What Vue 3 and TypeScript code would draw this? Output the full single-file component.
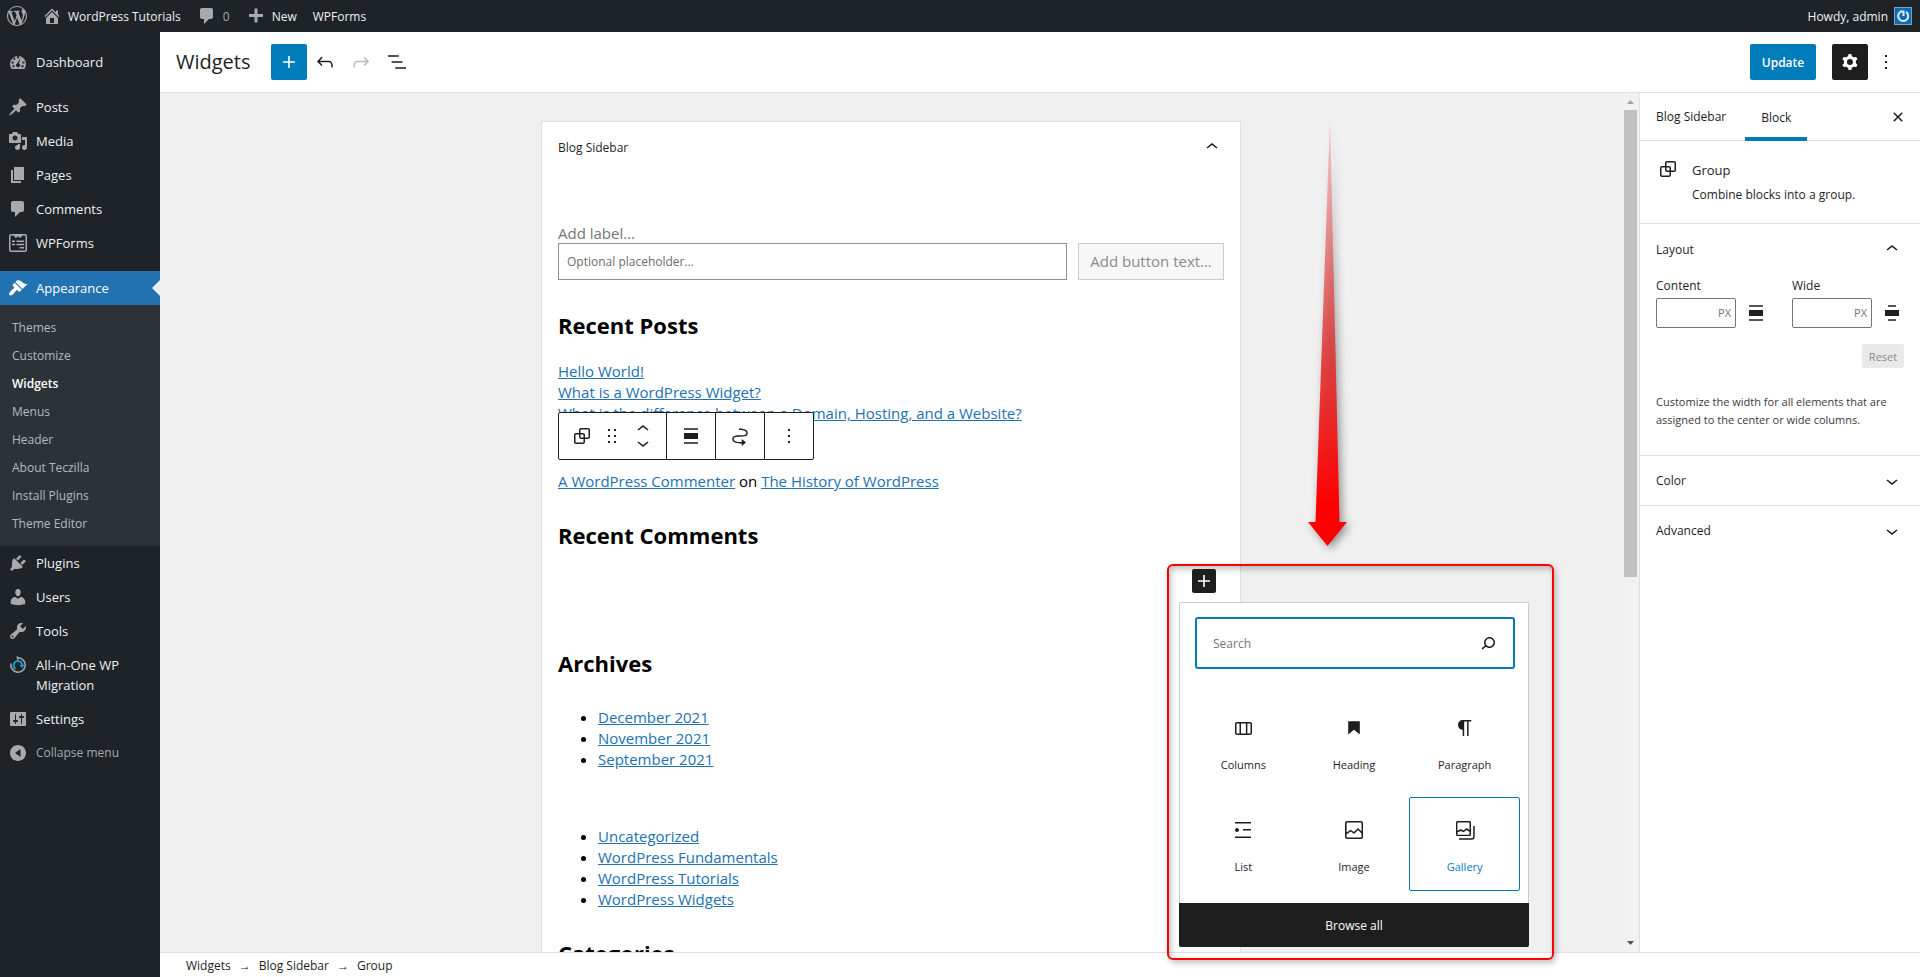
<script setup lang="ts">
import { ref } from 'vue'

interface MenuItem { label: string; icon: string }

const dash: Record<string, string> = {
  wordpress: 'M20 10c0-5.51-4.49-10-10-10C4.48 0 0 4.49 0 10c0 5.52 4.48 10 10 10 5.51 0 10-4.48 10-10zM7.78 15.37L4.37 6.22c.55-.02 1.17-.08 1.17-.08.5-.06.44-1.13-.06-1.11 0 0-1.45.11-2.37.11-.18 0-.37 0-.58-.01C4.12 2.69 6.87 1.11 10 1.11c2.33 0 4.45.87 6.05 2.34-.68-.11-1.65.39-1.65 1.58 0 .74.45 1.36.9 2.1.35.61.55 1.36.55 2.46 0 1.49-1.4 5-1.4 5l-3.03-8.37c.54-.02.82-.17.82-.17.5-.05.44-1.25-.06-1.22 0 0-1.44.12-2.38.12-.87 0-2.33-.12-2.33-.12-.5-.03-.56 1.2-.06 1.22l.92.08 1.26 3.41zM17.41 10c.24-.64.74-1.87.43-4.25.7 1.29 1.05 2.71 1.05 4.25 0 3.29-1.73 6.24-4.4 7.78.97-2.59 1.94-5.2 2.92-7.78zM6.1 18.09C3.12 16.65 1.11 13.53 1.11 10c0-1.3.23-2.48.72-3.59C3.25 10.3 4.67 14.2 6.1 18.09zm4.03-6.63l2.58 6.98c-.86.29-1.76.45-2.71.45-.79 0-1.57-.11-2.29-.33.81-2.38 1.62-4.74 2.42-7.1z',
  home: 'M16 8.5l1.53 1.53-1.06 1.06L10 4.6l-6.47 6.49-1.06-1.06L10 2.5l4 4v-2h2v4zm-6-2.46l6 5.99V18H4v-5.97zM12 17v-5H8v5h4z',
  comments: 'M5 2h9c1.1 0 2 .9 2 2v7c0 1.1-.9 2-2 2h-2l-5 5v-5H5c-1.1 0-2-.9-2-2V4c0-1.1.9-2 2-2z',
  plus: 'M17 8v3h-5.5v5.5h-3V11H3V8h5.500V2.500h3V8H17z',
  dashboard: 'M3.760 17A8 8 0 1 1 16.240 17ZM9 4.200v2h2v-2zM5.300 5.800v2h2v-2zM12.700 5.800l-3.600 5.600a2 2 0 1 0 1.900 0zM3.500 9.500v2h2v-2zM14.500 9.500v2h2v-2zM4.500 13.300v2h2v-2zM13.500 13.300v2h2v-2z',
  post: 'M10.44 3.02l1.82-1.82 6.36 6.35-1.83 1.82c-1.05-.68-2.48-.57-3.41.36l-.75.75c-.92.93-1.04 2.35-.35 3.41l-1.83 1.82-2.41-2.41-2.8 2.79c-.42.42-3.38 2.71-3.8 2.29s1.86-3.39 2.28-3.81l2.79-2.79L4.1 9.36l1.83-1.82c1.05.69 2.48.57 3.4-.36l.75-.75c.93-.92 1.05-2.35.36-3.41z',
  media: 'M13 11V4c0-.55-.45-1-1-1h-1.67L9 1H5L3.67 3H2c-.55 0-1 .45-1 1v7c0 .55.45 1 1 1h10c.55 0 1-.45 1-1zM7 4.5c1.38 0 2.5 1.12 2.5 2.5S8.38 9.5 7 9.5 4.5 8.38 4.5 7 5.62 4.5 7 4.5zM14 6h5v10.5c0 1.38-1.12 2.5-2.5 2.5S14 17.88 14 16.5s1.12-2.5 2.5-2.5c.17 0 .34.02.5.05V9h-3V6zm-4 8.05V13h2v3.5c0 1.38-1.12 2.5-2.5 2.5S7 17.88 7 16.5 8.12 14 9.5 14c.17 0 .34.02.5.05z',
  page: 'M6 15V2h10v13H6zm-1 1h8v2H3V5h2v11z',
  forms: 'M3 1h14a2 2 0 0 1 2 2v14a2 2 0 0 1-2 2H3a2 2 0 0 1-2-2V3a2 2 0 0 1 2-2zM2.500 3v14c0 .3.2.5.5.5h14c.3 0 .5-.2.5-.5V3c0-.3-.2-.5-.5-.5h-2.200L12 5 10 3.200 8 5 5.200 2.500H3c-.3 0-.5.2-.5.5zM4 7.500h3V9H4zM8.500 7.500H16V9H8.500zM4 10.700h3v1.500H4zM8.500 10.700H16v1.500H8.500zM11.500 14H16v1.500h-4.500z',
  appearance: 'M14.48 11.06L7.41 3.99l1.5-1.5c.5-.56 2.3-.47 3.51.32 1.21.8 1.43 1.28 2.91 2.1 1.18.64 2.45 1.26 4.45.85zm-.71.71L6.7 4.7 4.93 6.47c-.39.39-.39 1.02 0 1.41l1.06 1.06c.39.39.39 1.03 0 1.42-.6.6-1.43 1.11-2.21 1.69-.35.26-.7.53-1.01.84C1.43 14.23.4 16.08 1.4 17.07c.99 1 2.84-.03 4.18-1.36.31-.31.58-.66.85-1.02.57-.78 1.08-1.61 1.69-2.21.39-.39 1.02-.39 1.41 0l1.06 1.06c.39.39 1.02.39 1.41 0z',
  plugins: 'M13.11 4.36L9.87 7.6 8 5.73l3.24-3.24c.35-.34 1.05-.2 1.56.32.52.51.66 1.21.31 1.55zm-8 1.77l.91-1.12 9.01 9.01-1.19.84c-.71.71-2.63 1.16-3.82 1.16H6.14L4.9 17.26c-.59.59-1.54.59-2.12 0-.59-.58-.59-1.53 0-2.12l1.24-1.24v-3.88c0-1.13.4-3.19 1.09-3.89zm7.26 3.97l3.24-3.24c.34-.35 1.04-.21 1.55.31.52.51.66 1.21.31 1.55l-3.24 3.25z',
  users: 'M10 9.25c-2.27 0-2.73-3.44-2.73-3.44C7 4.02 7.82 2 9.97 2c2.16 0 2.98 2.02 2.71 3.81 0 0-.41 3.44-2.68 3.44zm0 2.57L12.72 10c2.39 0 4.52 2.33 4.52 4.53v2.49s-3.65 1.13-7.24 1.13c-3.65 0-7.24-1.13-7.24-1.13v-2.49c0-2.25 1.94-4.48 4.47-4.48z',
  tools: 'M16.68 9.77c-1.34 1.34-3.3 1.67-4.95.99l-5.41 6.52c-.99.99-2.59.99-3.58 0s-.99-2.59 0-3.57l6.52-5.42c-.68-1.65-.35-3.61.99-4.95 1.28-1.28 3.12-1.62 4.72-1.06l-2.89 2.89 2.82 2.82 2.86-2.87c.53 1.58.18 3.39-1.08 4.65zM3.81 16.21c.4.39 1.04.39 1.43 0 .4-.4.4-1.04 0-1.43-.39-.4-1.03-.4-1.43 0-.39.39-.39 1.03 0 1.43z',
  settings: 'M18 16V4c0-.55-.45-1-1-1H3c-.55 0-1 .45-1 1v12c0 .55.45 1 1 1h14c.55 0 1-.45 1-1zM8 11h1c.55 0 1 .45 1 1s-.45 1-1 1H8v1.5c0 .28-.22.5-.5.5s-.5-.22-.5-.5V13H6c-.55 0-1-.45-1-1s.45-1 1-1h1V5.500c0-.28.22-.5.5-.5s.5.22.5.5V11zm5-2h-1c-.55 0-1-.45-1-1s.45-1 1-1h1V5.500c0-.28.22-.5.5-.5s.5.22.5.5V7h1c.55 0 1 .45 1 1s-.45 1-1 1h-1v5.500c0 .28-.22.5-.5.5s-.5-.22-.5-.5V9z',
  collapse: 'M10 2c4.420 0 8 3.580 8 8s-3.580 8-8 8-8-3.580-8-8 3.580-8 8-8zM12.500 14V6L7 10z',
}

const icon: Record<string, string> = {
  plus: 'M18 11.2h-5.2V6h-1.6v5.2H6v1.6h5.2V18h1.6v-5.2H18z',
  undo: 'M18.3 11.7c-.6-.6-1.4-.9-2.3-.9H6.7l2.9-3.3-1.1-1-4.5 5L8.5 16l1-1-2.7-2.7H16c.5 0 .9.2 1.3.5 1 1 1 3.4 1 4.5v.3h1.5v-.2c0-1.5 0-4.3-1.5-5.7z',
  redo: 'M15.6 6.5l-1.1 1 2.9 3.3H8c-.9 0-1.7.3-2.3.9-1.4 1.5-1.4 4.2-1.4 5.6v.2h1.5v-.3c0-1.1 0-3.5 1-4.5.3-.3.7-.5 1.3-.5h9.2L14.5 15l1.1 1.1 4.6-4.6-4.6-5z',
  listView: 'M13.8 5.2H3v1.5h10.800V5.200zm-3.600 12v1.500H21v-1.500H10.200zm7.200-6H6.600v1.500h10.800v-1.500z',
  cog: 'M10.289 4.836A1 1 0 0111.275 4h1.306a1 1 0 01.987.836l.244 1.466c.787.26 1.503.679 2.108 1.218l1.393-.522a1 1 0 011.216.437l.653 1.13a1 1 0 01-.23 1.273l-1.148.944a6.025 6.025 0 010 2.435l1.149.946a1 1 0 01.23 1.272l-.653 1.13a1 1 0 01-1.216.437l-1.394-.522c-.605.54-1.32.958-2.108 1.218l-.244 1.466a1 1 0 01-.987.836h-1.306a1 1 0 01-.986-.836l-.244-1.466a5.995 5.995 0 01-2.108-1.218l-1.394.522a1 1 0 01-1.217-.436l-.653-1.131a1 1 0 01.23-1.272l1.149-.946a6.026 6.026 0 010-2.435l-1.148-.944a1 1 0 01-.23-1.272l.653-1.131a1 1 0 011.217-.437l1.393.522a5.994 5.994 0 012.108-1.218l.244-1.466zM14.929 12a3 3 0 11-6 0 3 3 0 016 0z',
  more: 'M13 19h-2v-2h2v2zm0-6h-2v-2h2v2zm0-6h-2V5h2v2z',
  close: 'M12 13.06l3.712 3.713 1.061-1.06L13.061 12l3.712-3.712-1.06-1.06L12 10.938 8.288 7.227l-1.061 1.06L10.939 12l-3.712 3.712 1.06 1.061L12 13.061z',
  up: 'M6.5 12.4L12 8l5.5 4.4-.9 1.2L12 10l-4.5 3.6-1-1.2z',
  down: 'M17.5 11.6L12 16l-5.5-4.4.9-1.2L12 14l4.5-3.6 1 1.2z',
  group: 'M18 4h-7c-1.1 0-2 .9-2 2v3H6c-1.1 0-2 .9-2 2v7c0 1.1.9 2 2 2h7c1.1 0 2-.9 2-2v-3h3c1.1 0 2-.9 2-2V6c0-1.1-.9-2-2-2zm-4.5 14c0 .3-.2.5-.5.5H6c-.3 0-.5-.2-.5-.5v-7c0-.3.2-.5.5-.5h3V13c0 1.1.9 2 2 2h2.5v3zm0-4.5H11c-.3 0-.5-.2-.5-.5v-2.500H13c.3 0 .5.2.5.5v2.500zm5-.5c0 .3-.2.5-.5.5h-3V11c0-1.1-.9-2-2-2h-2.500V6c0-.3.2-.5.5-.5h7c.3 0 .5.2.5.5v7z',
  drag: 'M8 7h2V5H8v2zm6-2v2h2V5h-2zM8 13h2v-2H8v2zm6 0h2v-2h-2v2zm-6 6h2v-2H8v2zm6 0h2v-2h-2v2z',
  alignFull: 'M5 15h14V9H5v6zm0 4.8h14v-1.500H5v1.500zM5 4.200v1.500h14V4.200H5z',
  alignWide: 'M5 9v6h14V9H5zm11-4.800H8v1.500h8V4.200zM8 19.800h8v-1.500H8v1.500z',
  moveTo: 'M19.75 9c0-1.257-.565-2.197-1.39-2.858-.797-.64-1.827-1.017-2.815-1.247-1.802-.42-3.703-.403-4.383-.396L11 4.5V6l.177-.001c.696-.006 2.416-.02 4.028.356.887.207 1.67.518 2.216.957.52.416.829.945.829 1.688 0 .592-.167.966-.407 1.23-.255.281-.656.508-1.236.674-1.19.34-2.82.346-4.607.346h-.077c-1.692 0-3.527 0-4.942.404-.732.209-1.424.545-1.935 1.108-.526.579-.796 1.33-.796 2.238 0 1.257.565 2.197 1.39 2.858.797.64 1.827 1.017 2.815 1.247 1.802.42 3.703.403 4.383.396L13 19.5h.714V22L18 18.5 13.714 15v3H13l-.177.001c-.696.006-2.416.02-4.028-.356-.887-.207-1.67-.518-2.216-.957-.52-.416-.829-.945-.829-1.688 0-.592.167-.966.407-1.23.255-.281.656-.508 1.237-.674 1.189-.34 2.819-.346 4.606-.346h.077c1.692 0 3.527 0 4.941-.404.732-.209 1.425-.545 1.936-1.108.526-.579.796-1.33.796-2.238z',
  search: 'M13.5 6C10.5 6 8 8.5 8 11.5c0 1.1.3 2.1.9 3l-3.4 3 1 1.1 3.4-2.9c1 .9 2.2 1.4 3.6 1.4 3 0 5.5-2.5 5.5-5.5C19 8.5 16.5 6 13.5 6zm0 9.5c-2.2 0-4-1.8-4-4s1.8-4 4-4 4 1.8 4 4-1.8 4-4 4z',
  columns: 'M19 6H6c-1.1 0-2 .9-2 2v9c0 1.1.9 2 2 2h13c1.1 0 2-.9 2-2V8c0-1.1-.9-2-2-2zm-4.1 1.5v10H10v-10h4.9zM5.5 17V8c0-.3.2-.5.5-.5h2.5v10H6c-.3 0-.5-.2-.5-.5zm14 0c0 .3-.2.5-.5.5h-2.600v-10H19c.3 0 .5.2.5.5v9z',
  heading: 'M6.2 5.2v13.4l5.8-4.8 5.8 4.8V5.200z',
  paragraph: 'M18.3 4H9.900v-.1l-.9.2c-2.300.4-4 2.400-4 4.800s1.700 4.400 4 4.800l.7.1V20h1.500V5.500h2.900V20h1.500V5.500h2.700V4z',
  list: 'M4 4v1.500h16V4H4zm8 8.500h8V11h-8v1.500zM4 20h16v-1.500H4V20zm4-8c0-1.100-.9-2-2-2s-2 .9-2 2 .9 2 2 2 2-.9 2-2z',
  image: 'M19 3H5c-1.1 0-2 .9-2 2v14c0 1.1.9 2 2 2h14c1.1 0 2-.9 2-2V5c0-1.1-.9-2-2-2zM5 4.5h14c.3 0 .5.2.5.5v8.4l-3-2.9c-.3-.3-.8-.3-1 0L11.9 14 9 12c-.3-.2-.6-.2-.8 0l-3.6 2.6V5c-.1-.3.1-.5.4-.5zm14 15H5c-.3 0-.5-.2-.5-.5v-2.4l4.1-3 3 1.9c.3.2.7.2.9-.1L16 12l3.5 3.4V19c0 .3-.2.5-.5.5z',
  gallery: 'M20.2 8v11c0 .7-.6 1.2-1.2 1.2H6v1.5h13c1.5 0 2.7-1.2 2.7-2.8V8zM18 16.4V4.6c0-.9-.7-1.6-1.6-1.6H4.6C3.7 3 3 3.7 3 4.6v11.800c0 .9.7 1.6 1.6 1.6h11.800c.9 0 1.6-.7 1.6-1.6zM4.5 4.6c0-.1.1-.1.1-.1h11.800c.1 0 .1.1.1.1V12l-2.300-1.700c-.3-.2-.6-.2-.9 0l-2.900 2.100L8 11.300c-.2-.1-.5-.1-.7 0l-2.900 1.500V4.600zm0 11.800v-1.800l3.200-1.700 2.400 1.200c.2.1.5.1.8 0l2.800-2 2.800 2v2.500c0 .1-.1.1-.1.1H4.600c0-.1-.1-.2-.1-.2z',
}

const contentMenu: MenuItem[] = [
  { label: 'Posts', icon: 'post' },
  { label: 'Media', icon: 'media' },
  { label: 'Pages', icon: 'page' },
  { label: 'Comments', icon: 'comments' },
  { label: 'WPForms', icon: 'forms' },
]
const submenu = ['Themes', 'Customize', 'Widgets', 'Menus', 'Header', 'About Teczilla', 'Install Plugins', 'Theme Editor']
const systemMenu: MenuItem[] = [
  { label: 'Plugins', icon: 'plugins' },
  { label: 'Users', icon: 'users' },
  { label: 'Tools', icon: 'tools' },
  { label: 'All-in-One WP Migration', icon: 'migration' },
  { label: 'Settings', icon: 'settings' },
]

const posts = ['Hello World!', 'What is a WordPress Widget?', 'What is the difference between a Domain, Hosting, and a Website?']
const archives = ['December 2021', 'November 2021', 'September 2021']
const categories = ['Uncategorized', 'WordPress Fundamentals', 'WordPress Tutorials', 'WordPress Widgets']

const blocks: MenuItem[] = [
  { label: 'Columns', icon: 'columns' },
  { label: 'Heading', icon: 'heading' },
  { label: 'Paragraph', icon: 'paragraph' },
  { label: 'List', icon: 'list' },
  { label: 'Image', icon: 'image' },
  { label: 'Gallery', icon: 'gallery' },
]
const widths = [
  { id: 'content-width', label: 'Content', icon: 'alignFull' },
  { id: 'wide-width', label: 'Wide', icon: 'alignWide' },
]

const activeBlock = ref('Gallery')
const query = ref('')
const placeholderText = ref('')
</script>

<template>
  <div class="shell">
    <header class="adminbar">
      <a href="#" class="bar-item logo" aria-label="About WordPress"><svg class="i20" viewBox="0 0 20 20"><path :d="dash.wordpress" /></svg></a>
      <a href="#" class="bar-item site"><svg class="i20" viewBox="0 0 20 20"><path fill-rule="evenodd" :d="dash.home" /></svg>WordPress Tutorials</a>
      <a href="#" class="bar-item count"><svg class="i20" viewBox="0 0 20 20"><path :d="dash.comments" /></svg>0</a>
      <a href="#" class="bar-item new"><svg class="i20" viewBox="0 0 20 20"><path :d="dash.plus" /></svg>New</a>
      <a href="#" class="bar-item">WPForms</a>
      <a href="#" class="bar-item account">Howdy, admin
        <svg class="avatar" viewBox="0 0 18 18">
          <rect x="0.5" y="0.5" width="17" height="17" fill="#0a6fb8" stroke="#8c9aa5" />
          <path d="M6.200 5A5 5 0 1 0 12 4.900" fill="none" stroke="#dcebf7" stroke-width="2" />
          <path d="M6 4.500h3.500v4.500" fill="none" stroke="#dcebf7" stroke-width="2" />
        </svg>
      </a>
    </header>

    <nav class="menu" aria-label="Main menu">
      <a href="#" class="menu-item"><svg class="i20" viewBox="0 0 20 20"><path fill-rule="evenodd" :d="dash.dashboard" /></svg><span>Dashboard</span></a>
      <div class="separator"></div>
      <a v-for="m in contentMenu" :key="m.label" href="#" class="menu-item">
        <svg class="i20" viewBox="0 0 20 20"><path fill-rule="evenodd" :d="dash[m.icon]" /></svg><span>{{ m.label }}</span>
      </a>
      <div class="separator"></div>
      <a href="#" class="menu-item current"><svg class="i20" viewBox="0 0 20 20"><path :d="dash.appearance" /></svg><span>Appearance</span></a>
      <ul class="submenu">
        <li v-for="s in submenu" :key="s"><a href="#" :class="{ active: s === 'Widgets' }">{{ s }}</a></li>
      </ul>
      <a v-for="m in systemMenu" :key="m.label" href="#" class="menu-item">
        <svg v-if="m.icon === 'migration'" class="i20" viewBox="0 0 20 20">
          <path d="M10 2.800a7.200 7.200 0 1 1-7 5.600" fill="none" stroke="#a0a0a0" stroke-width="1.600" />
          <path d="M8.500 1l3.500 1.800-2.800 2.700z" fill="#a0a0a0" />
          <path d="M7.500 13.800a4.300 4.300 0 1 1 6.700-3.800" fill="none" stroke="#1e96dc" stroke-width="2" />
          <path d="M11.500 9.800h5l-2.500 3.400z" fill="#1e96dc" />
        </svg>
        <svg v-else class="i20" viewBox="0 0 20 20"><path fill-rule="evenodd" :d="dash[m.icon]" /></svg>
        <span>{{ m.label }}</span>
      </a>
      <button type="button" class="menu-item collapse"><svg class="i20" viewBox="0 0 20 20"><path fill-rule="evenodd" :d="dash.collapse" /></svg><span>Collapse menu</span></button>
    </nav>

    <div class="editor">
      <div class="topbar">
        <h1>Widgets</h1>
        <button type="button" class="square primary" aria-label="Add block"><svg class="i24" viewBox="0 0 24 24"><path :d="icon.plus" /></svg></button>
        <button type="button" class="square" aria-label="Undo"><svg class="i24" viewBox="0 0 24 24"><path :d="icon.undo" /></svg></button>
        <button type="button" class="square faded" aria-label="Redo"><svg class="i24" viewBox="0 0 24 24"><path :d="icon.redo" /></svg></button>
        <button type="button" class="square" aria-label="List view"><svg class="i24" viewBox="0 0 24 24"><path :d="icon.listView" /></svg></button>
        <button type="button" class="update">Update</button>
        <button type="button" class="square dark" aria-label="Settings"><svg class="i24" viewBox="0 0 24 24"><path fill-rule="evenodd" :d="icon.cog" /></svg></button>
        <button type="button" class="square" aria-label="Options"><svg class="i24" viewBox="0 0 24 24"><path :d="icon.more" /></svg></button>
      </div>

      <div class="workspace">
        <main class="canvas">
          <section class="card">
            <button type="button" class="card-head">Blog Sidebar<svg class="i24" viewBox="0 0 24 24"><path :d="icon.up" /></svg></button>
            <div class="card-body">
              <label class="search-label" for="widget-search">Add label…</label>
              <div class="search-row">
                <input id="widget-search" v-model="placeholderText" type="text" placeholder="Optional placeholder…" />
                <button type="button">Add button text…</button>
              </div>
              <h2 class="posts-title">Recent Posts</h2>
              <ul class="posts">
                <li v-for="p in posts" :key="p"><a href="#">{{ p }}</a></li>
              </ul>
              <p class="comment"><a href="#">A WordPress Commenter</a> on <a href="#">The History of WordPress</a></p>
              <h2 class="comments-title">Recent Comments</h2>
              <h2 class="archives-title">Archives</h2>
              <ul class="bullets">
                <li v-for="a in archives" :key="a"><a href="#">{{ a }}</a></li>
              </ul>
              <ul class="bullets second">
                <li v-for="c in categories" :key="c"><a href="#">{{ c }}</a></li>
              </ul>
              <h2 class="categories-title">Categories</h2>
            </div>

            <div class="block-toolbar" role="toolbar" aria-label="Block tools">
              <div class="tools wide">
                <button type="button" aria-label="Group"><svg class="i24" viewBox="0 0 24 24"><path :d="icon.group" /></svg></button>
                <button type="button" aria-label="Drag"><svg class="i24" viewBox="0 0 24 24"><path :d="icon.drag" /></svg></button>
                <div class="movers">
                  <button type="button" aria-label="Move up"><svg class="i24" viewBox="0 0 24 24"><path :d="icon.up" /></svg></button>
                  <button type="button" aria-label="Move down"><svg class="i24" viewBox="0 0 24 24"><path :d="icon.down" /></svg></button>
                </div>
              </div>
              <div class="tools"><button type="button" aria-label="Align"><svg class="i24" viewBox="0 0 24 24"><path :d="icon.alignFull" /></svg></button></div>
              <div class="tools"><button type="button" aria-label="Move to widget area"><svg class="i24" viewBox="0 0 24 24"><path :d="icon.moveTo" /></svg></button></div>
              <div class="tools"><button type="button" aria-label="Options"><svg class="i24" viewBox="0 0 24 24"><path :d="icon.more" /></svg></button></div>
            </div>
          </section>
        </main>
        <div class="scrollbar" aria-hidden="true">
          <svg viewBox="0 0 17 17"><path d="M5 11h7L8.500 7z" fill="#a3a3a3" /></svg>
          <div class="thumb"></div>
          <svg viewBox="0 0 17 17"><path d="M5 6h7L8.500 10z" fill="#505050" /></svg>
        </div>

        <div class="overlay">
          <svg class="arrow" viewBox="0 0 60 440">
            <defs>
              <linearGradient id="arrow-fill" x1="0" y1="0" x2="0" y2="1">
                <stop offset="0" stop-color="#f06060" stop-opacity="0.250" />
                <stop offset="0.200" stop-color="#e84848" stop-opacity="0.450" />
                <stop offset="0.550" stop-color="#e03030" stop-opacity="0.850" />
                <stop offset="0.900" stop-color="#ff0000" />
              </linearGradient>
            </defs>
            <path d="M30 0L39.500 404H47L27.500 428 8 404h7.500z" fill="url(#arrow-fill)" />
          </svg>
          <div class="inserter-zone">
            <button type="button" class="appender" aria-label="Add block"><svg class="i24" viewBox="0 0 24 24"><path :d="icon.plus" /></svg></button>
            <div class="inserter">
              <div class="search-box">
                <input v-model="query" type="text" placeholder="Search" aria-label="Search for blocks" />
                <svg class="i24" viewBox="0 0 24 24"><path :d="icon.search" /></svg>
              </div>
              <div class="block-grid">
                <button v-for="b in blocks" :key="b.label" type="button" :class="{ active: b.label === activeBlock }" @click="activeBlock = b.label">
                  <svg class="i24" viewBox="0 0 24 24"><path :d="icon[b.icon]" /></svg>
                  <span>{{ b.label }}</span>
                </button>
              </div>
              <button type="button" class="browse">Browse all</button>
            </div>
          </div>
        </div>

        <aside class="panel">
          <div class="tabs">
            <button type="button">Blog Sidebar</button>
            <button type="button" class="active">Block</button>
            <button type="button" class="close" aria-label="Close settings"><svg class="i24" viewBox="0 0 24 24"><path :d="icon.close" /></svg></button>
          </div>
          <div class="block-info">
            <svg class="i24" viewBox="0 0 24 24"><path :d="icon.group" /></svg>
            <div>
              <h3>Group</h3>
              <p>Combine blocks into a group.</p>
            </div>
          </div>
          <section class="layout">
            <button type="button" class="section-head">Layout<svg class="i24" viewBox="0 0 24 24"><path :d="icon.up" /></svg></button>
            <div class="width-row">
              <div v-for="w in widths" :key="w.id" class="width-field">
                <label :for="w.id">{{ w.label }}</label>
                <div class="unit-row">
                  <div class="unit-box"><input :id="w.id" type="text" /><span>PX</span></div>
                  <svg class="i24" viewBox="0 0 24 24"><path :d="icon[w.icon]" /></svg>
                </div>
              </div>
            </div>
            <button type="button" class="reset" disabled>Reset</button>
            <p class="help">Customize the width for all elements that are assigned to the center or wide columns.</p>
          </section>
          <button type="button" class="section-head ruled">Color<svg class="i24" viewBox="0 0 24 24"><path :d="icon.down" /></svg></button>
          <button type="button" class="section-head ruled">Advanced<svg class="i24" viewBox="0 0 24 24"><path :d="icon.down" /></svg></button>
        </aside>
      </div>

      <footer class="crumbs"><a href="#">Widgets</a><span>→</span><a href="#">Blog Sidebar</a><span>→</span><a href="#">Group</a></footer>
    </div>
  </div>
</template>

<style>
body { margin: 0; background: #fff; }
</style>

<style scoped>
* { box-sizing: border-box; }
.shell {
  display: grid;
  grid-template-columns: 160px minmax(0, 1fr);
  grid-template-rows: 32px minmax(0, 1fr);
  height: 100vh;
  overflow: hidden;
  font-family: "Open Sans", "Noto Sans", sans-serif;
  font-size: 12px;
  color: #1e1e1e;
}
button, input { font: inherit; color: inherit; }
button { border: 0; padding: 0; background: none; cursor: pointer; }
h1, h2, h3, p, ul { margin: 0; padding: 0; font-weight: 400; }
a { color: #2271b1; }
svg { fill: currentColor; flex: none; display: block; }
.i20 { width: 20px; height: 20px; }
.i24 { width: 24px; height: 24px; }

.adminbar { grid-column: 1 / 3; display: flex; align-items: center; background: #1d2327; }
.bar-item { display: flex; align-items: center; gap: 6px; padding-right: 16px; color: #f0f0f1; text-decoration: none; }
.bar-item .i20 { color: #a7aaad; }
.logo { padding: 0 15px 0 7px; }
.count { color: #a7aaad; }
.account { margin-left: auto; padding-right: 8px; }
.avatar { width: 18px; height: 18px; }

.menu { background: #1d2327; padding-top: 13px; font-size: 13px; }
.menu-item { display: flex; width: 100%; gap: 8px; padding: 7px 8px; line-height: 20px; color: #f0f0f1; text-decoration: none; text-align: left; position: relative; }
.menu-item .i20 { color: #a7aaad; }
.separator { height: 11px; }
.current { background: #2271b1; color: #fff; }
.current .i20 { color: #fff; }
.current::after { content: ""; position: absolute; right: 0; top: 9px; border: 8px solid transparent; border-left: 0; border-right-color: #f0f0f0; }
.submenu { list-style: none; background: #2c3338; padding: 9px 0 8px; font-size: 12px; line-height: 28px; }
.submenu a { display: block; padding-left: 12px; color: #b4b9be; text-decoration: none; }
.submenu .active { color: #fff; font-weight: 600; }
.menu-item.collapse { color: #a7aaad; font-size: 12px; }

.editor { display: flex; flex-direction: column; min-height: 0; min-width: 0; background: #fff; }
.topbar { display: flex; align-items: center; height: 61px; padding: 0 16px; border-bottom: 1px solid #e0e0e0; flex: none; }
h1 { font-size: 20px; line-height: 28px; margin-right: 20px; }
.square { width: 36px; height: 36px; display: grid; place-items: center; border-radius: 2px; }
.primary { background: #007cba; color: #fff; }
.dark { background: #1e1e1e; color: #fff; margin: 0 0 0 16px; }
.faded { color: #bbb; }
.update { margin-left: auto; width: 66px; height: 36px; border-radius: 2px; background: #007cba; color: #fff; font-weight: 600; }

.workspace { position: relative; flex: 1; min-height: 0; display: flex; }
.canvas { flex: 1; min-width: 0; overflow: hidden; background: #f0f0f0; padding: 28px 16px 0; }
.card { position: relative; max-width: 700px; margin: 0 auto; background: #fff; border: 1px solid #e0e0e0; padding-bottom: 100px; }
.card-head { display: flex; width: 100%; align-items: center; justify-content: space-between; height: 50px; padding: 0 16px; font-weight: 500; }
.card-body { padding: 51px 16px 0; font-size: 15px; line-height: 21px; color: #000; }
.search-label { display: block; line-height: 20px; color: #757575; }
.search-row { display: flex; gap: 11px; height: 37px; }
.search-row input { flex: 1; min-width: 0; border: 1px solid #8c8f94; padding: 0 8px; font-size: 12px; }
.search-row input::placeholder { color: #6d6d6d; opacity: 1; }
.search-row button { width: 146px; border: 1px solid #ccc; background: #f7f7f7; color: #8c8c8c; white-space: nowrap; }
h2 { font-size: 22px; line-height: 32px; font-weight: 700; }
.posts { list-style: none; }
.posts-title { margin: 29px 0 20px; }
.comment { margin-top: 47px; }
.comments-title { margin-top: 27px; }
.archives-title { margin: 96px 0 28px; }
.bullets { padding-left: 40px; }
.second { margin-top: 56px; }
.categories-title { margin-top: 27px; }

.block-toolbar { position: absolute; left: 16px; top: 290px; display: flex; height: 48px; border: 1px solid #1e1e1e; border-radius: 2px; background: #fff; }
.tools { display: flex; width: 49px; align-items: center; justify-content: center; }
.tools + .tools { border-left: 1px solid #1e1e1e; }
.tools.wide { width: 107px; justify-content: flex-start; padding-left: 11px; gap: 6px; }
.movers { display: flex; flex-direction: column; width: 24px; margin-left: 1px; }
.movers button { height: 14px; display: flex; align-items: center; }

.scrollbar { width: 17px; background: #f1f1f1; display: flex; flex-direction: column; flex: none; }
.scrollbar svg { width: 17px; height: 17px; }
.thumb { flex: 0 0 467px; margin: 0 2px; background: #c1c1c1; }
.scrollbar svg:last-child { margin-top: auto; }

.overlay { position: absolute; left: 1007px; top: 27px; bottom: -8px; width: 387px; pointer-events: none; z-index: 2; }
.arrow { position: absolute; left: 133px; top: -2px; width: 60px; height: 440px; filter: drop-shadow(3px 3px 4px rgba(0, 0, 0, 0.4)); }
.inserter-zone { position: absolute; left: 0; right: 0; bottom: 0; border: 2px solid #f00; border-radius: 6px; padding: 3px 23px 11px 10px; box-shadow: 2px 3px 6px rgba(0, 0, 0, 0.25), inset 2px 3px 6px rgba(0, 0, 0, 0.25); pointer-events: auto; }
.appender { width: 24px; height: 24px; display: block; margin: 0 0 9px 13px; background: #1e1e1e; color: #fff; border-radius: 2px; }
.inserter { background: #fff; border: 1px solid #ccc; border-bottom: 0; border-radius: 2px; }
.search-box { display: flex; align-items: center; height: 52px; margin: 14px 13px 26px 15px; padding: 0 13px 0 16px; border: 2px solid #007cba; border-radius: 3px; }
.search-box input { flex: 1; min-width: 0; border: 0; outline: 0; background: none; padding: 0; }
.search-box input::placeholder { color: #757575; opacity: 1; }
.block-grid { display: grid; grid-template-columns: repeat(3, 1fr); gap: 8px 0; padding: 0 8px 12px; font-size: 11px; }
.block-grid button { height: 94px; display: flex; flex-direction: column; align-items: center; gap: 17px; padding-top: 20px; border: 1px solid transparent; border-radius: 2px; }
.block-grid .active { border-color: #007cba; }
.block-grid .active span { color: #007cba; }
.browse { display: block; width: calc(100% + 2px); margin: 0 -1px; height: 44px; background: #1e1e1e; color: #fff; font-weight: 500; border-radius: 0 0 2px 2px; }

.panel { width: 281px; flex: none; border-left: 1px solid #e0e0e0; background: #fff; overflow: hidden; }
.tabs { display: flex; gap: 3px; height: 48px; border-bottom: 1px solid #ddd; }
.tabs button { padding: 0 16px; }
.tabs .active { font-weight: 500; border-bottom: 4px solid #007cba; padding-top: 4px; margin-bottom: -1px; }
.tabs .close { margin-left: auto; padding: 0 10px; }
.block-info { display: flex; gap: 12px; padding: 16px; height: 82px; }
h3 { font-size: 13px; line-height: 26px; color: #1e1e1e; }
.block-info p { line-height: 24px; }
.layout { border-top: 1px solid #e0e0e0; height: 232px; display: flex; flex-direction: column; }
.section-head { display: flex; flex: none; width: 100%; height: 50px; align-items: center; justify-content: space-between; padding: 0 16px; font-weight: 500; }
.ruled { border-top: 1px solid #e0e0e0; }
.width-row { display: flex; gap: 20px; padding: 0 16px; line-height: 24px; }
.width-field { flex: none; width: 116px; }
.width-field label { display: block; }
.unit-row { display: flex; align-items: center; gap: 8px; }
.unit-box { display: flex; align-items: center; width: 80px; height: 30px; border: 1px solid #757575; border-radius: 2px; padding-right: 4px; color: #757575; font-size: 11px; }
.unit-box input { flex: 1; min-width: 0; border: 0; outline: 0; padding: 0 4px; background: none; }
.reset { align-self: flex-end; width: 42px; height: 24px; margin: 16px 16px 0; border-radius: 2px; background: #e9e9e9; color: #8a8a8a; font-size: 11px; }
.help { margin: 25px 16px 0; font-size: 11px; line-height: 18px; color: #3a3a3a; }

.crumbs { flex: none; height: 25px; display: flex; align-items: center; gap: 8px; padding-left: 26px; border-top: 1px solid #e0e0e0; }
.crumbs a { color: inherit; text-decoration: none; }
</style>
